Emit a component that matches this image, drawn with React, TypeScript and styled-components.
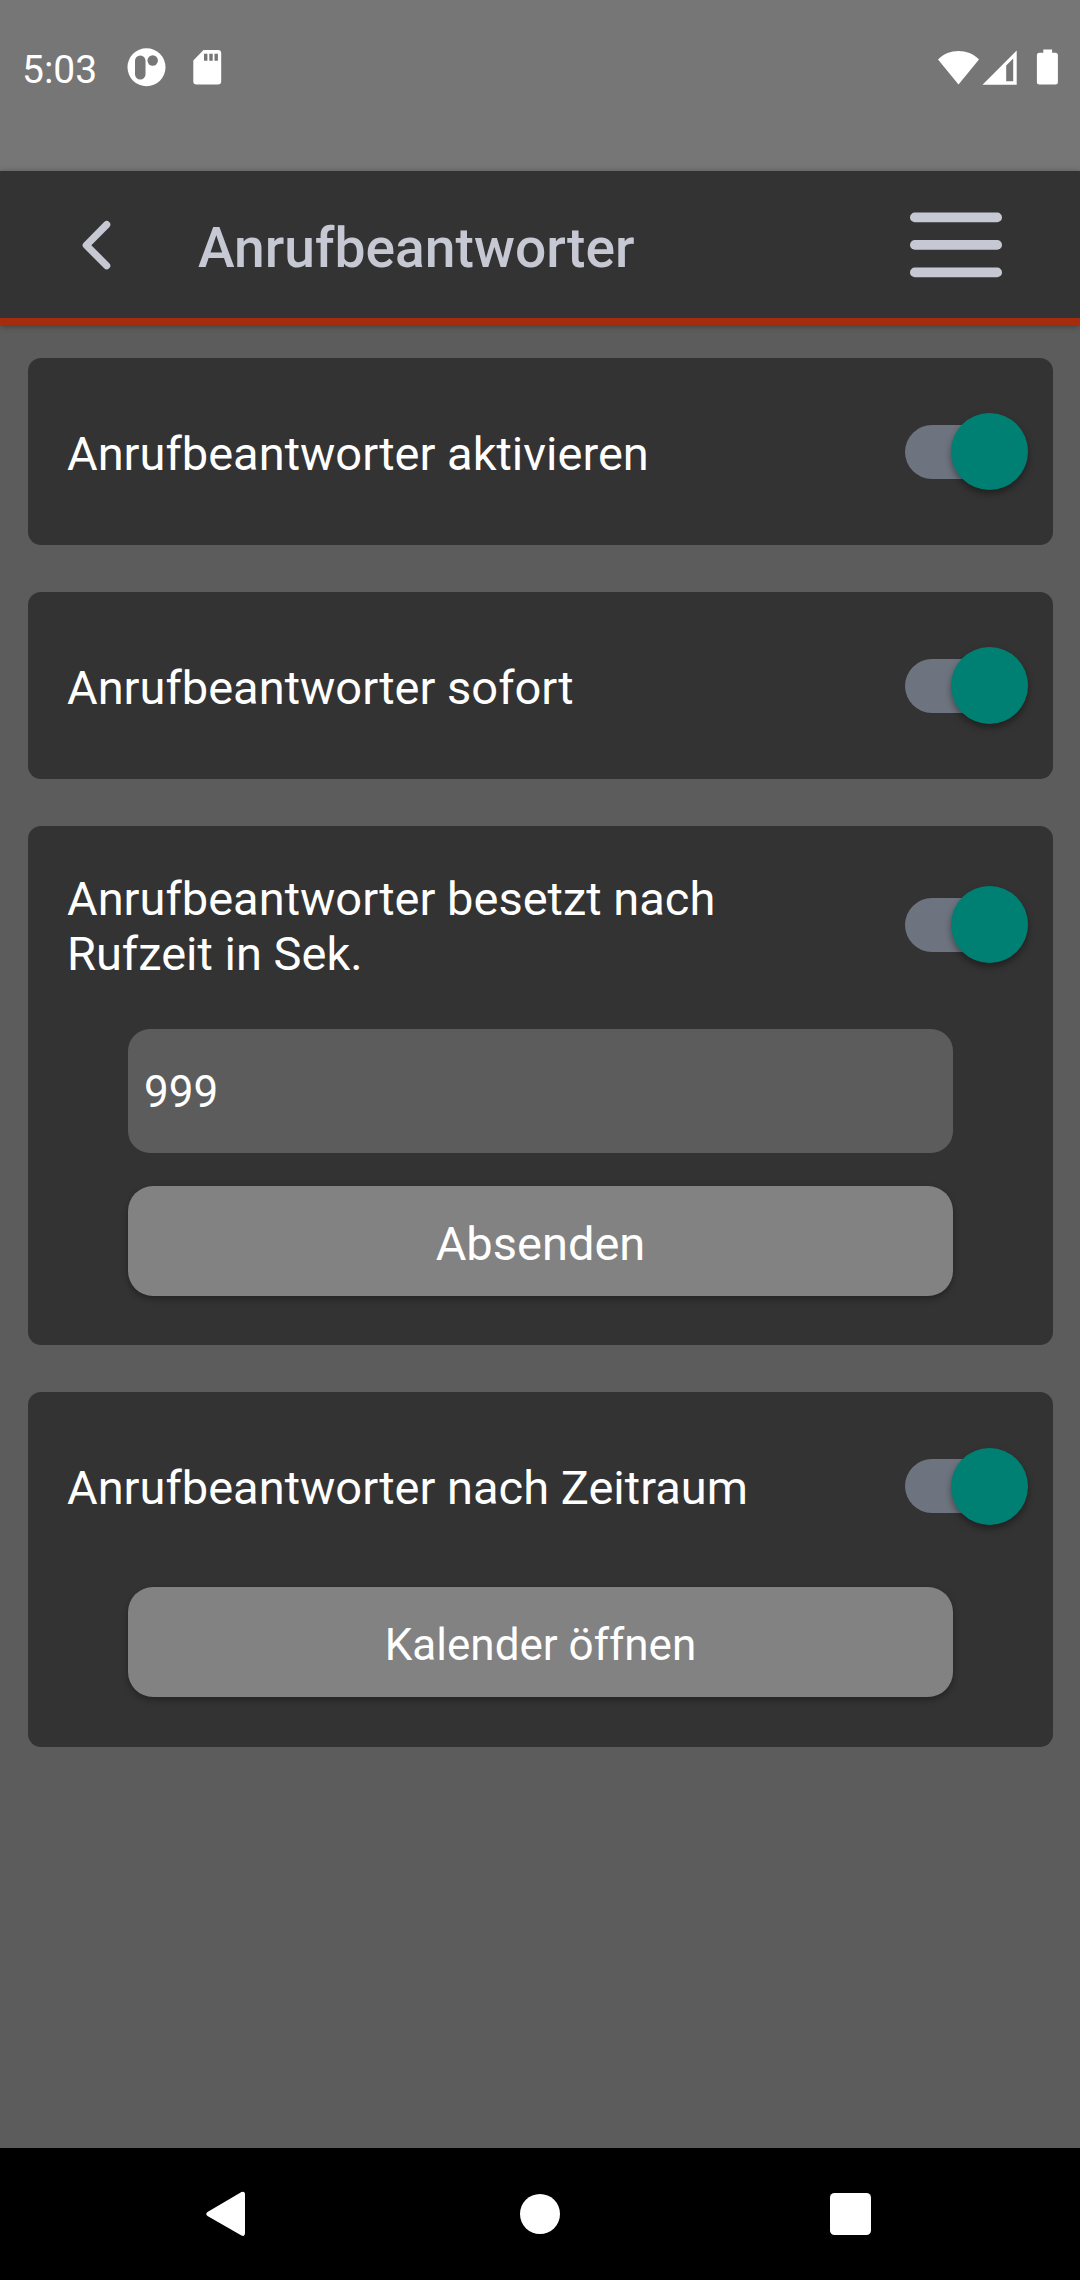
import React from "react";
import styled, { createGlobalStyle } from "styled-components";

const GlobalStyle = createGlobalStyle`
  *, *::before, *::after { box-sizing: border-box; }
  body { margin: 0; background: #5c5c5c; font-family: Roboto, "Liberation Sans", sans-serif; }
  button, input { font-family: inherit; border: 0; padding: 0; color: inherit; }
`;

const Screen = styled.div`
  display: flex;
  flex-direction: column;
  width: 1080px;
  height: 2280px;
  background: #5c5c5c;
  color: #fff;
`;

const StatusBar = styled.div`
  display: flex;
  align-items: flex-start;
  justify-content: space-between;
  height: 171px;
  padding: 45px 22px 0 22px;
  background: #767676;
`;

const StatusGroup = styled.div`
  display: flex;
  align-items: center;
  height: 46px;
`;

const Clock = styled.span`
  width: 104px;
  padding-top: 4px;
  font-size: 39px;
  line-height: 46px;
`;

const Header = styled.header`
  display: flex;
  align-items: center;
  height: 154px;
  padding: 0 78px 0 81px;
  background: #333;
  border-bottom: 7px solid #a52c0c;
  box-shadow: 0 1px 6px rgba(0, 0, 0, 0.35);
`;

const IconButton = styled.button`
  display: flex;
  background: none;
`;

const Title = styled.h1`
  flex: 1;
  margin: 0;
  padding: 7px 0 0 87px;
  color: #c6c9d3;
  font-size: 55.2px;
  font-weight: 500;
  line-height: 64px;
`;

const Content = styled.main`
  display: flex;
  flex: 1;
  flex-direction: column;
  gap: 47px;
  padding: 33px 27px 0 28px;
`;

const Card = styled.section<{ $height: number }>`
  display: flex;
  flex-direction: column;
  height: ${(p) => p.$height}px;
  border-radius: 13px;
  background: #333;
`;

const Row = styled.div<{ $height: number; $after?: number }>`
  display: flex;
  align-items: center;
  justify-content: space-between;
  height: ${(p) => p.$height}px;
  margin-bottom: ${(p) => p.$after ?? 0}px;
  padding: 0 25.5px 0 39px;
`;

const Label = styled.span`
  width: 700px;
  padding-top: 3px;
  font-size: 47px;
  line-height: 55px;
`;

const Track = styled.button`
  display: flex;
  align-items: center;
  justify-content: flex-end;
  width: 123px;
  height: 54px;
  background: linear-gradient(#6d747f, #6d747f) left / 100px 54px no-repeat;
  border-radius: 27px 0 0 27px;
`;

const Thumb = styled.span`
  flex: none;
  width: 77px;
  height: 77px;
  border-radius: 50%;
  background: #008073;
  box-shadow: 0 4px 7px rgba(0, 0, 0, 0.38);
`;

const Controls = styled.div`
  display: flex;
  flex-direction: column;
  gap: 33px;
  padding: 0 100px;
`;

const Field = styled.input`
  width: 100%;
  height: 124px;
  padding: 2px 16px 0;
  border-radius: 22px;
  background: #5c5c5c;
  font-size: 44px;
  outline: none;
`;

const Button = styled.button<{ $size: number; $top: number }>`
  height: 110px;
  padding-top: ${(p) => p.$top}px;
  border-radius: 25px;
  background: #828282;
  box-shadow: 0 3px 6px rgba(0, 0, 0, 0.32);
  font-size: ${(p) => p.$size}px;
`;

const NavBar = styled.nav`
  display: grid;
  grid-template-columns: 310px 1fr 317px;
  align-items: center;
  justify-items: center;
  height: 132px;
  padding: 0 71px;
  background: #000;

  & > :nth-child(2) {
    margin-left: 7px;
  }
`;

function Switch() {
  return (
    <Track role="switch" aria-checked="true">
      <Thumb />
    </Track>
  );
}

export default function App() {
  return (
    <Screen>
      <GlobalStyle />
      <StatusBar>
        <StatusGroup>
          <Clock>5:03</Clock>
          <svg width="100" height="46" viewBox="126 45 100 46" fill="#fff">
            <circle cx="146.5" cy="67.3" r="19" />
            <rect x="135" y="55.5" width="10.5" height="24" rx="5.2" fill="#767676" />
            <circle cx="152.7" cy="60.5" r="5.2" fill="#767676" />
            <path d="M203.500 50H218a3.200 3.200 0 0 1 3.200 3.200V81.200a3.200 3.200 0 0 1-3.200 3.200H196.500a3.200 3.200 0 0 1-3.200-3.200V60.500z" />
            <path d="M204 53.800h3.400v7H204zM209.300 53.800h3.400v7h-3.400zM214.500 53.800h3.400v7h-3.400z" fill="#767676" />
          </svg>
        </StatusGroup>
        <StatusGroup>
          <svg width="122" height="46" viewBox="936 45 122 46" fill="#fff">
            <path d="M958.500 84.500L938 59.500C949 48.200 968 48.200 979 59.500z" />
            <path fillRule="evenodd" d="M982.500 84.700L1016.700 50.500V84.700zM1006.200 65.500V81.300H1013.200V58.500z" />
            <path d="M1043.300 49.400h8.800v3.300h3.300a2.500 2.500 0 0 1 2.500 2.500V82a2.500 2.500 0 0 1-2.500 2.500h-16a2.500 2.500 0 0 1-2.500-2.500V55.200a2.500 2.500 0 0 1 2.500-2.500h3.900z" />
          </svg>
        </StatusGroup>
      </StatusBar>
      <Header>
        <IconButton aria-label="Zurück">
          <svg width="30" height="50" viewBox="0 0 30 50" fill="none" stroke="#c6c9d3" strokeWidth="7.200" strokeLinecap="round" strokeLinejoin="round">
            <path d="M25.700 4.600L5.300 25.200L25.700 45.800" />
          </svg>
        </IconButton>
        <Title>Anrufbeantworter</Title>
        <IconButton aria-label="Menü">
          <svg width="92" height="66" viewBox="0 0 92 66" fill="#c6c9d3">
            <rect x="0" y="0.500" width="92" height="9.800" rx="4.900" />
            <rect x="0" y="28" width="92" height="9.800" rx="4.900" />
            <rect x="0" y="55.500" width="92" height="9.800" rx="4.900" />
          </svg>
        </IconButton>
      </Header>
      <Content>
        <Card $height={187}>
          <Row $height={187}>
            <Label>Anrufbeantworter aktivieren</Label>
            <Switch />
          </Row>
        </Card>
        <Card $height={187}>
          <Row $height={187}>
            <Label>Anrufbeantworter sofort</Label>
            <Switch />
          </Row>
        </Card>
        <Card $height={519}>
          <Row $height={197} $after={6}>
            <Label>Anrufbeantworter besetzt nach Rufzeit in Sek.</Label>
            <Switch />
          </Row>
          <Controls>
            <Field type="text" defaultValue="999" />
            <Button $size={47} $top={4}>Absenden</Button>
          </Controls>
        </Card>
        <Card $height={355}>
          <Row $height={188} $after={7}>
            <Label>Anrufbeantworter nach Zeitraum</Label>
            <Switch />
          </Row>
          <Controls>
            <Button $size={44} $top={6}>Kalender öffnen</Button>
          </Controls>
        </Card>
      </Content>
      <NavBar>
        <svg width="40" height="46" viewBox="0 0 40 46" fill="#fff">
          <path d="M1.500 21L35.500 1Q39 0 39 3.500V41.500Q39 46 35.500 44.500L1.500 25Q-1 23 1.500 21z" />
        </svg>
        <svg width="40" height="40" viewBox="0 0 40 40" fill="#fff">
          <circle cx="20" cy="20" r="20" />
        </svg>
        <svg width="41" height="42" viewBox="0 0 41 42" fill="#fff">
          <rect width="41" height="42" rx="4.500" />
        </svg>
      </NavBar>
    </Screen>
  );
}
